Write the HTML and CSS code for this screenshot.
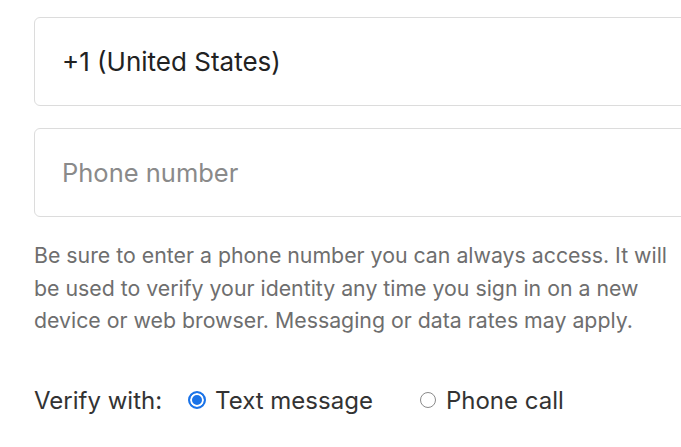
FILE: index.html
```html
<!DOCTYPE html>
<html lang="en">
<head>
	<meta charset="UTF-8">
	<title>Phone number</title>
	<link rel="stylesheet" href="styles.css">
</head>
<body>
	<div class="phoneForm">
		<div class="field">
			<span class="fieldValue">+1 (United States)</span>
		</div>
		<div class="field">
			<span class="fieldHint">Phone number</span>
		</div>
		<p class="note">Be sure to enter a phone number you can always access. It will be used to verify your identity any time you sign in on a new device or web browser. Messaging or data rates may apply.</p>
		<div class="verify">
			<span class="verifyLabel">Verify with:</span>
			<label class="option"><span class="radio checked"></span>Text message</label>
			<label class="option"><span class="radio"></span>Phone call</label>
		</div>
	</div>
</body>
</html>
```

FILE: styles.css
```css
*{
	margin: 0px;
	padding: 0px;
	box-sizing: border-box;
}
body{
	background: #fff;
	font-family: "Inter", "Liberation Sans", sans-serif;
	overflow: hidden;
}
.phoneForm{
	width: 720px;
	padding: 17px 0 0 34px;
}
.field{
	height: 89px;
	border: 1px solid #dcdcdc;
	border-radius: 6px;
	display: flex;
	align-items: center;
	padding-left: 27px;
	margin-bottom: 22px;
	font-size: 25.5px;
}
.fieldValue{
	color: #222;
	font-size: 26px;
}
.fieldHint{
	color: #8a8a8a;
}
.note{
	width: 640px;
	margin-top: 22px;
	font-size: 21.3px;
	line-height: 32.5px;
	color: #6e6e6e;
}
.verify{
	display: flex;
	align-items: center;
	margin-top: 49px;
	font-size: 24px;
	color: #333;
}
.verifyLabel{
	margin-right: 26px;
}
.option{
	display: flex;
	align-items: center;
	margin-right: 47px;
}
.radio{
	width: 16px;
	height: 16px;
	border: 1px solid #8a8a8a;
	border-radius: 50%;
	margin-right: 10px;
}
.radio.checked{
	width: 18px;
	height: 18px;
	border: 2px solid #1a73e8;
	background: #1a73e8;
	box-shadow: inset 0 0 0 2px #fff;
	margin-right: 9px;
}
```
